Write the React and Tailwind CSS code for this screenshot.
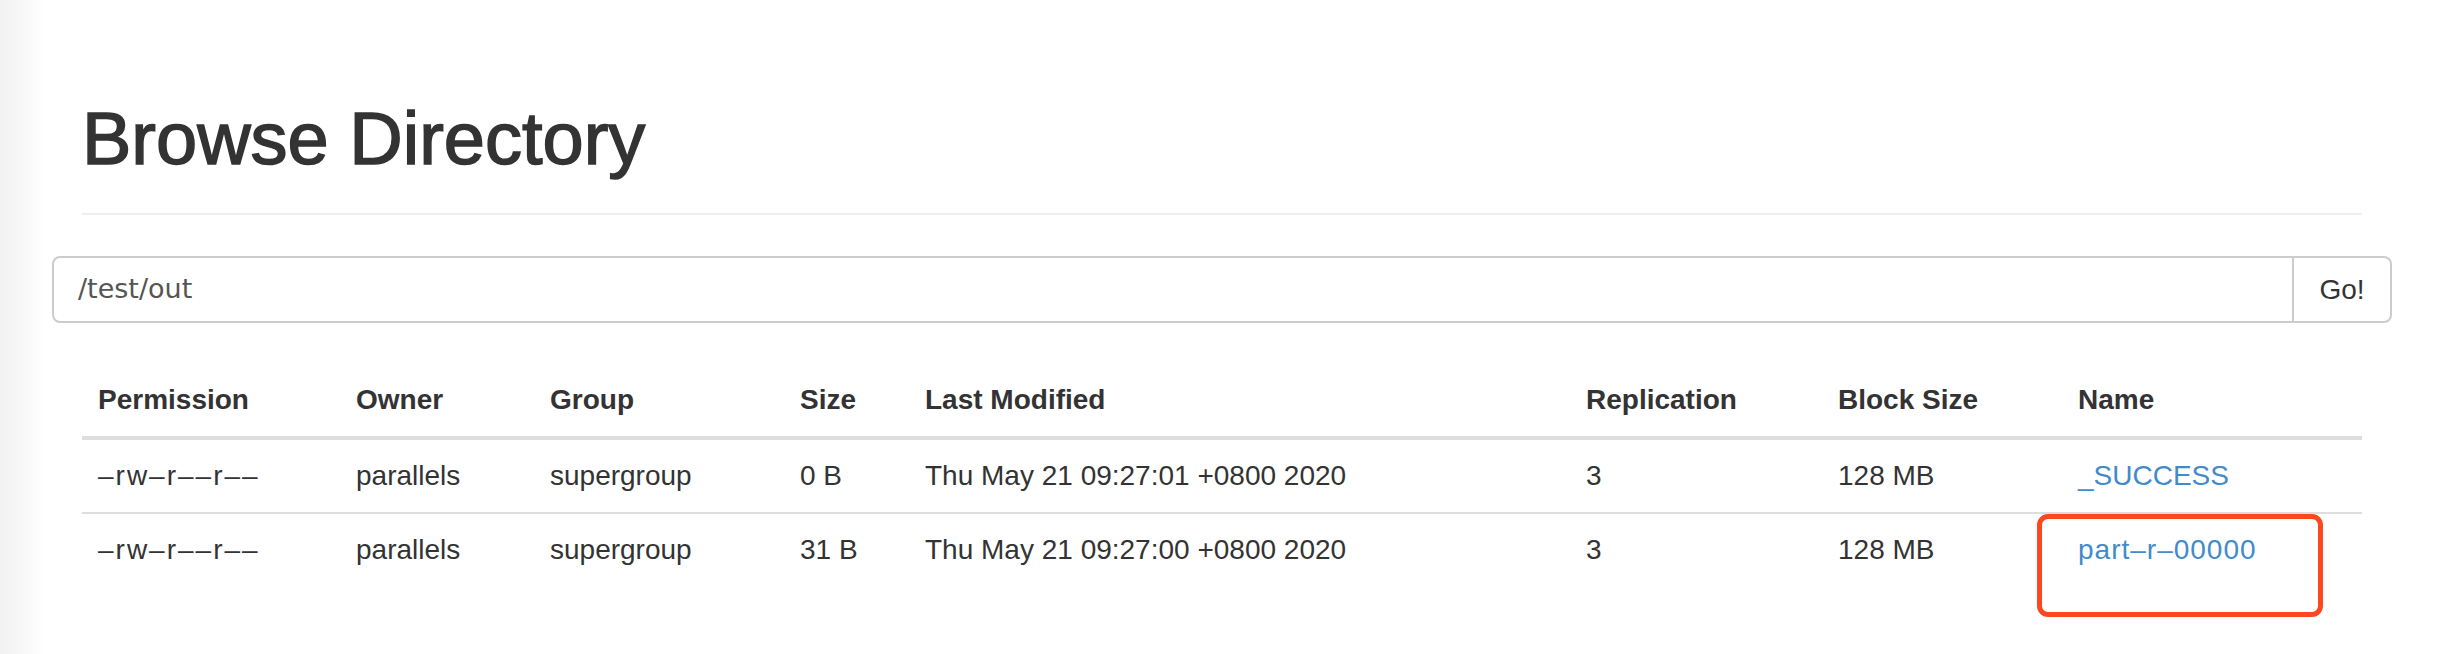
import React from "react";

const columns = [
  { label: "Permission", width: "w-[258px]" },
  { label: "Owner", width: "w-[194px]" },
  { label: "Group", width: "w-[250px]" },
  { label: "Size", width: "w-[125px]" },
  { label: "Last Modified", width: "w-[661px]" },
  { label: "Replication", width: "w-[252px]" },
  { label: "Block Size", width: "w-[240px]" },
  { label: "Name", width: "w-[300px]" },
];

const files = [
  {
    permission: "–rw–r––r––",
    owner: "parallels",
    group: "supergroup",
    size: "0 B",
    modified: "Thu May 21 09:27:01 +0800 2020",
    replication: "3",
    blockSize: "128 MB",
    name: "_SUCCESS",
  },
  {
    permission: "–rw–r––r––",
    owner: "parallels",
    group: "supergroup",
    size: "31 B",
    modified: "Thu May 21 09:27:00 +0800 2020",
    replication: "3",
    blockSize: "128 MB",
    name: "part–r–00000",
    highlighted: true,
  },
];

function FileRow({ file, first }) {
  const cell = `px-4 py-4 leading-[40px] text-left align-top whitespace-nowrap ${
    first ? "" : "border-t-2 border-[#ddd]"
  }`;

  return (
    <tr>
      <td className={`${cell} tracking-[2px]`}>{file.permission}</td>
      <td className={cell}>{file.owner}</td>
      <td className={cell}>{file.group}</td>
      <td className={cell}>{file.size}</td>
      <td className={cell}>{file.modified}</td>
      <td className={cell}>{file.replication}</td>
      <td className={cell}>{file.blockSize}</td>
      <td className={`${cell} relative`}>
        <a href="#" className={`text-[#428bca] ${file.highlighted ? "tracking-[1px]" : ""}`}>
          {file.name}
        </a>
        {/* annotation box drawn over the cell */}
        {file.highlighted && (
          <div className="absolute left-[-25px] top-0 w-[286px] h-[103px] border-[5px] border-[#fc4720] rounded-[11px] pointer-events-none" />
        )}
      </td>
    </tr>
  );
}

export default function App() {
  return (
    <div
      className="min-h-screen bg-white bg-[linear-gradient(to_right,#f1f1f1,#ffffff_45px)] text-[#333] text-[28px]"
      style={{ fontFamily: '"Liberation Sans", Arial, sans-serif' }}
    >
      <div className="px-[82px]">
        {/* Page header */}
        <div className="pt-[99px] pb-[34px] border-b-2 border-[#eee]">
          <h1 className="text-[74px] leading-[80px] font-normal [-webkit-text-stroke:1.5px_#333]">
            Browse Directory
          </h1>
        </div>

        {/* Path input */}
        <div className="flex mt-[41px] -mx-[30px] h-[67px]">
          <div
            className="flex-1 flex items-center pl-[24px] border-2 border-[#ccc] rounded-l-[8px] bg-white text-[#555] text-[27px]"
            style={{ fontFamily: '"DejaVu Sans", sans-serif' }}
          >
            /test/out
          </div>
          <button className="w-[100px] -ml-[2px] border-2 border-[#ccc] rounded-r-[8px] bg-white text-[#333] text-[28px]">
            Go!
          </button>
        </div>

        {/* Listing */}
        <table className="mt-[41px] w-full table-fixed border-separate border-spacing-0">
          <thead>
            <tr>
              {columns.map((col) => (
                <th
                  key={col.label}
                  className={`${col.width} px-4 py-4 leading-[40px] text-left font-bold border-b-4 border-[#ddd] whitespace-nowrap`}
                >
                  {col.label}
                </th>
              ))}
            </tr>
          </thead>
          <tbody>
            {files.map((file, i) => (
              <FileRow key={file.name} file={file} first={i === 0} />
            ))}
          </tbody>
        </table>
      </div>
    </div>
  );
}
